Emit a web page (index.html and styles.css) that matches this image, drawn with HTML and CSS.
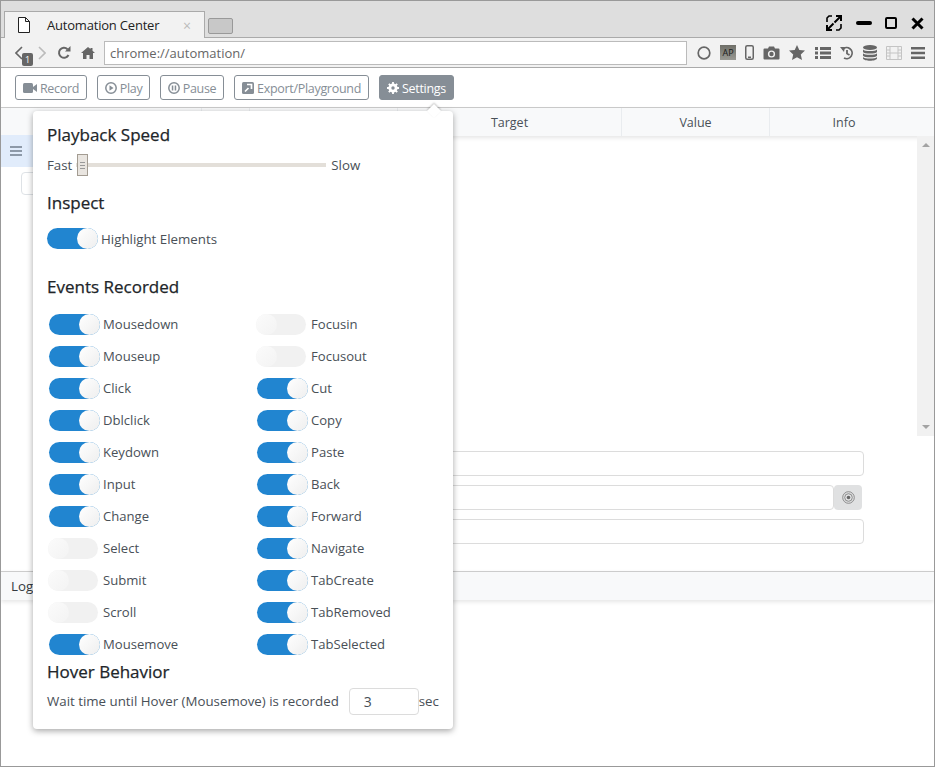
FILE: index.html
```html
<!DOCTYPE html>
<html>
<head>
    <title>Automation Center</title>
    <link rel="stylesheet" href="styles.css">
</head>
<body>
<div class="window">
    <div class="tabstrip">
        <div class="tab">
            <svg class="tab-file" width="12" height="16" viewBox="0 0 12 16"><path d="M.5.5h7l4 4v11H.5zM7.500.5v4h4" fill="#fff" stroke="#222"/></svg>
            <span class="tab-title">Automation Center</span>
            <span class="tab-close">×</span>
        </div>
        <div class="newtab"></div>
        <div class="winctl">
            <svg width="16" height="16" viewBox="0 0 16 16"><path d="M1 7V3l2-2h3M15 9v4l-2 2h-3" fill="none" stroke="#000" stroke-width="1.600"/><path d="M8.500 7.500L15 1M10 1h5v5M7.500 8.500L1 15M1 10v5h5" fill="none" stroke="#000" stroke-width="2"/></svg>
            <svg width="16" height="16" viewBox="0 0 16 16"><rect x="0" y="6" width="16" height="4" rx="2" fill="#000"/></svg>
            <svg width="12" height="12" viewBox="0 0 12 12"><rect x="1" y="1" width="10" height="10" rx="1" fill="none" stroke="#000" stroke-width="2"/></svg>
            <svg width="13" height="13" viewBox="0 0 13 13"><path d="M1.500 1.500l10 10M11.500 1.500l-10 10" stroke="#000" stroke-width="3"/></svg>
        </div>
    </div>

    <div class="navbar">
        <svg class="nav-back" width="8" height="14" viewBox="0 0 8 14"><path d="M7 1L1 7l6 6" fill="none" stroke="#666" stroke-width="1.600"/></svg>
        <span class="nav-badge">1</span>
        <svg class="nav-fwd" width="8" height="14" viewBox="0 0 8 14"><path d="M1 1l6 6-6 6" fill="none" stroke="#bbb" stroke-width="1.600"/></svg>
        <svg class="nav-reload" width="14" height="14" viewBox="0 0 14 14"><path d="M11.500 9A5 5 0 1 1 10.500 3.200" fill="none" stroke="#666" stroke-width="2"/><path d="M8 5.500h5.500V0z" fill="#666"/></svg>
        <svg class="nav-home" width="14" height="12" viewBox="0 0 14 12"><path d="M7 0L0 6h2v6h3.500V8h3v4H12V6h2l-2.500-2.200V1h-2v1z" fill="#666"/></svg>
        <div class="omnibox">chrome://automation/</div>
        <div class="nav-icons">
            <svg width="14" height="14" viewBox="0 0 14 14"><circle cx="7" cy="7" r="5.800" fill="none" stroke="#666" stroke-width="1.700"/></svg>
            <span class="ap-icon">AP</span>
            <svg width="9" height="15" viewBox="0 0 9 15"><rect x=".75" y=".75" width="7.500" height="13.500" rx="1.500" fill="none" stroke="#666" stroke-width="1.500"/><rect x="3" y="11.500" width="3" height="1.500" fill="#666"/></svg>
            <svg width="17" height="14" viewBox="0 0 17 14"><path d="M1.500 2.500H5L6 .5h5l1 2h3.500q1 0 1 1v9q0 1-1 1h-14q-1 0-1-1v-9q0-1 1-1z" fill="#666"/><circle cx="8.500" cy="8" r="3.600" fill="#f2f2f2"/><circle cx="8.500" cy="8" r="2.200" fill="#666"/></svg>
            <svg width="16" height="15" viewBox="0 0 16 15"><path d="M8 0l2.300 5 5.700.6-4.200 3.800 1.200 5.600L8 12.200 3 15l1.200-5.600L0 5.600 5.700 5z" fill="#666"/></svg>
            <svg width="16" height="12" viewBox="0 0 16 12"><path d="M0 0h3v3H0zM5 0h11v3H5zM0 4.500h3v3H0zM5 4.500h11v3H5zM0 9h3v3H0zM5 9h11v3H5z" fill="#666"/></svg>
            <svg width="14" height="14" viewBox="0 0 14 14"><path d="M2.500 3.500A5.500 5.500 0 1 1 4 12M7 4v3.500l2.500 1.500" fill="none" stroke="#666" stroke-width="1.800"/><path d="M0 1l5 0-1 5z" fill="#666"/></svg>
            <svg width="14" height="16" viewBox="0 0 14 16"><ellipse cx="7" cy="2.500" rx="7" ry="2.500" fill="#666"/><path d="M0 4.500c1 2 13 2 14 0V7c-1 2-13 2-14 0zM0 8.300c1 2 13 2 14 0v2.500c-1 2-13 2-14 0zM0 12c1 2 13 2 14 0v1.500c-1 3-13 3-14 0z" fill="#666"/></svg>
            <svg width="16" height="14" viewBox="0 0 16 14"><path d="M.5.500h15v13H.5zM4 .5v13M12 .5v13M.5 4h3.500M.5 7h3.500M.5 10h3.500M12 4h3.500M12 7h3.500M12 10h3.500M4 7h8" fill="none" stroke="#c4c4c4"/></svg>
            <svg width="14" height="12" viewBox="0 0 14 12"><path d="M0 0h14v2.400H0zM0 4.800h14v2.400H0zM0 9.600h14V12H0z" fill="#666"/></svg>
        </div>
    </div>

    <div class="app-toolbar">
        <button class="btn btn-record">
            <svg width="14" height="10" viewBox="0 0 14 10"><rect width="10" height="10" rx="1.500" fill="#868e96"/><path d="M10 4l4-3v8l-4-3z" fill="#868e96"/></svg>
            <span>Record</span>
        </button>
        <button class="btn btn-play">
            <svg width="12" height="12" viewBox="0 0 12 12"><circle cx="6" cy="6" r="5.200" fill="none" stroke="#868e96" stroke-width="1.500"/><path d="M4.500 3.200l4 2.800-4 2.800z" fill="#868e96"/></svg>
            <span>Play</span>
        </button>
        <button class="btn btn-pause">
            <svg width="12" height="12" viewBox="0 0 12 12"><circle cx="6" cy="6" r="5.200" fill="none" stroke="#868e96" stroke-width="1.500"/><path d="M3.800 3.500h1.500v5H3.800zM6.700 3.500h1.500v5H6.700z" fill="#868e96"/></svg>
            <span>Pause</span>
        </button>
        <button class="btn btn-export">
            <svg width="12" height="12" viewBox="0 0 12 12"><rect width="12" height="12" rx="1.500" fill="#868e96"/><path d="M3 9.500l3.500-3.500M5 2.500h4.500V7" fill="none" stroke="#fff" stroke-width="1.700"/></svg>
            <span>Export/Playground</span>
        </button>
        <button class="btn btn-settings">
            <svg width="12" height="12" viewBox="0 0 12 12"><circle cx="6" cy="6" r="3.400" fill="none" stroke="#fff" stroke-width="2.400"/><path d="M6 0v12M0 6h12M1.800 1.800l8.400 8.400M10.200 1.800l-8.400 8.400" stroke="#fff" stroke-width="1.800"/><circle cx="6" cy="6" r="1.700" fill="#868e96"/></svg>
            <span>Settings</span>
        </button>
    </div>

    <div class="table-head">
        <div class="th th-grip"></div>
        <div class="th th-num"></div>
        <div class="th th-cmd"></div>
        <div class="th th-target">Target</div>
        <div class="th th-value">Value</div>
        <div class="th th-info">Info</div>
    </div>

    <div class="table-body">
        <div class="rows">
            <div class="row-active">
                <svg width="12" height="10" viewBox="0 0 12 10"><path d="M0 0h12v2H0zM0 4h12v2H0zM0 8h12v2H0z" fill="#8d99a8"/></svg>
            </div>
            <div class="row-btn"></div>
        </div>
        <div class="scrollbar">
            <span class="arrow-up"></span>
            <span class="arrow-down"></span>
        </div>
    </div>

    <div class="form">
        <div class="field"></div>
        <div class="field-row">
            <div class="field field-short"></div>
            <div class="target-btn">
                <svg width="13" height="13" viewBox="0 0 13 13"><circle cx="6.500" cy="6.500" r="5.800" fill="none" stroke="#777" stroke-width=".8"/><circle cx="6.500" cy="6.500" r="3.800" fill="none" stroke="#777" stroke-width=".8"/><circle cx="6.500" cy="6.500" r="1.800" fill="#666"/></svg>
            </div>
        </div>
        <div class="field"></div>
    </div>

    <div class="logbar">Log</div>

    <div class="popover">
        <h3 class="pop-title pop-title-first">Playback Speed</h3>
        <div class="speed">
            <span>Fast</span>
            <div class="slider">
                <span class="slider-handle"></span>
            </div>
            <span>Slow</span>
        </div>

        <h3 class="pop-title pop-title-inspect">Inspect</h3>
        <div class="highlight">
            <span class="switch switch-flush"></span>
            <span>Highlight Elements</span>
        </div>

        <h3 class="pop-title pop-title-events">Events Recorded</h3>
        <div class="events">
            <div class="event"><span class="switch"></span>Mousedown</div>
            <div class="event"><span class="switch off"></span>Focusin</div>
            <div class="event"><span class="switch"></span>Mouseup</div>
            <div class="event"><span class="switch off"></span>Focusout</div>
            <div class="event"><span class="switch"></span>Click</div>
            <div class="event"><span class="switch"></span>Cut</div>
            <div class="event"><span class="switch"></span>Dblclick</div>
            <div class="event"><span class="switch"></span>Copy</div>
            <div class="event"><span class="switch"></span>Keydown</div>
            <div class="event"><span class="switch"></span>Paste</div>
            <div class="event"><span class="switch"></span>Input</div>
            <div class="event"><span class="switch"></span>Back</div>
            <div class="event"><span class="switch"></span>Change</div>
            <div class="event"><span class="switch"></span>Forward</div>
            <div class="event"><span class="switch off"></span>Select</div>
            <div class="event"><span class="switch"></span>Navigate</div>
            <div class="event"><span class="switch off"></span>Submit</div>
            <div class="event"><span class="switch"></span>TabCreate</div>
            <div class="event"><span class="switch off"></span>Scroll</div>
            <div class="event"><span class="switch"></span>TabRemoved</div>
            <div class="event"><span class="switch"></span>Mousemove</div>
            <div class="event"><span class="switch"></span>TabSelected</div>
        </div>

        <h3 class="pop-title">Hover Behavior</h3>
        <div class="hover-row">
            <span class="hover-text">Wait time until Hover (Mousemove) is recorded</span>
            <div class="hover-input">3</div>
            <span class="hover-unit">sec</span>
        </div>
    </div>
</div>
</body>
</html>
```

FILE: styles.css
```css
* {
    box-sizing: border-box;
}
body {
    margin: 0;
    font-family: "Open Sans", "Noto Sans", sans-serif;
    font-size: 13.3px;
    color: #495057;
    background-color: #fff;
}
.window {
    position: relative;
    width: 935px;
    height: 767px;
    border: 1px solid #999;
    overflow: hidden;
}

/* chrome */
.tabstrip {
    display: flex;
    align-items: flex-end;
    height: 37px;
    padding-left: 3px;
    background-color: #dedede;
    border-bottom: 1px solid #aaa;
}
.tab {
    display: flex;
    align-items: center;
    width: 201px;
    height: 27px;
    margin-bottom: -1px;
    padding: 0 13px;
    background-color: #f2f2f2;
    border: 1px solid #aaa;
    border-bottom: none;
    color: #222;
}
.tab-title {
    margin-left: 17px;
    font-size: 13px;
    letter-spacing: -0.2px;
}
.tab-close {
    margin-left: auto;
    color: #bbb;
    font-size: 14px;
}
.newtab {
    width: 25px;
    height: 16px;
    margin: 0 0 3px 3px;
    background-color: #c8c8c8;
    border: 1px solid #999;
    border-radius: 2px;
}
.winctl {
    display: flex;
    align-items: center;
    justify-content: space-between;
    width: 98px;
    height: 16px;
    margin: 0 10px 6px auto;
}
.navbar {
    display: flex;
    align-items: center;
    height: 30px;
    padding-left: 14px;
    background-color: #f2f2f2;
    border-bottom: 1px solid #aaa;
}
.nav-back {
    flex: none;
}
.nav-badge {
    width: 11px;
    height: 13px;
    margin: 13px 0 0 -1px;
    background-color: #666;
    border-radius: 2px;
    color: #fff;
    font-size: 9px;
    line-height: 13px;
    text-align: center;
}
.nav-fwd {
    margin-left: 5px;
}
.nav-reload {
    margin-left: 11px;
}
.nav-home {
    margin-left: 10px;
}
.omnibox {
    width: 583px;
    height: 24px;
    margin-left: 9px;
    padding-left: 5px;
    background-color: #fff;
    border: 1px solid #bbb;
    color: #666;
    font-size: 13px;
    line-height: 22px;
}
.nav-icons {
    display: flex;
    align-items: center;
    justify-content: space-between;
    width: 228px;
    margin-left: 10px;
}
.ap-icon {
    width: 16px;
    height: 15px;
    background: linear-gradient(#6f6f68, #9a9a94);
    color: #1c1c1c;
    font-size: 9px;
    line-height: 15px;
    text-align: center;
}

/* app */
.app-toolbar {
    display: flex;
    gap: 10px;
    height: 40px;
    padding: 7px 14px;
    border-bottom: 1px solid #ccc;
}
.btn {
    display: flex;
    align-items: center;
    justify-content: center;
    gap: 3px;
    height: 25px;
    padding: 0;
    background-color: #fff;
    border: 1px solid #868e96;
    border-radius: 3px;
    color: #868e96;
    font-family: inherit;
    font-size: 12.500px;
    letter-spacing: -0.3px;
}
.btn span {
    padding-top: 2px;
}
.btn-record {
    width: 72px;
}
.btn-play {
    width: 53px;
}
.btn-pause {
    width: 64px;
}
.btn-export {
    width: 135px;
}
.btn-settings {
    width: 75px;
    background-color: #868e96;
    color: #fff;
}
.table-head {
    display: flex;
    height: 28px;
    background-color: #f8f9fa;
    box-shadow: 0 2px 4px rgba(0, 0, 0, 0.1);
    color: #495057;
    font-size: 12.500px;
    line-height: 30px;
    text-align: center;
}
.th {
    border-right: 1px solid #e9ecef;
}
.th-grip {
    width: 201px;
}
.th-num {
    width: 48px;
}
.th-cmd {
    width: 148px;
}
.th-target {
    width: 224px;
}
.th-value {
    width: 148px;
}
.th-info {
    width: 148px;
    border-right: none;
}
.table-body {
    display: flex;
    justify-content: space-between;
    height: 300px;
}
.row-active {
    display: flex;
    align-items: center;
    width: 200px;
    height: 32px;
    margin-top: -1px;
    padding-left: 9px;
    background-color: #e1ecfb;
}
.row-btn {
    width: 60px;
    height: 23px;
    margin: 5px 0 0 20px;
    border: 1px solid #dee2e6;
    border-radius: 4px;
}
.scrollbar {
    display: flex;
    flex-direction: column;
    align-items: center;
    justify-content: space-between;
    width: 17px;
    padding: 7px 0;
    background-color: #f1f1f1;
}
.arrow-up {
    border: 4px solid transparent;
    border-top: none;
    border-bottom: 4px solid #a3a3a3;
}
.arrow-down {
    border: 4px solid transparent;
    border-bottom: none;
    border-top: 4px solid #a3a3a3;
}
.form {
    display: flex;
    flex-direction: column;
    gap: 9px;
    width: 863px;
    padding: 15px 0 0 200px;
}
.field {
    height: 25px;
    border: 1px solid #dcdcdc;
    border-radius: 4px;
}
.field-row {
    display: flex;
}
.field-short {
    flex: 1;
}
.target-btn {
    display: flex;
    align-items: center;
    justify-content: center;
    width: 28px;
    height: 25px;
    margin-right: 2px;
    background-color: #e0e1e2;
    border-radius: 4px;
}
.logbar {
    height: 29px;
    margin-top: 27px;
    padding-left: 10px;
    background-color: #f8f9fa;
    border-top: 1px solid #ccc;
    box-shadow: 0 2px 4px rgba(0, 0, 0, 0.1);
    color: #343a40;
    line-height: 28px;
}

/* settings popover */
.popover {
    position: absolute;
    top: 110px;
    left: 32px;
    width: 420px;
    height: 618px;
    padding: 0 14px;
    background-color: #fff;
    border-radius: 4px;
    box-shadow: 0 2px 6px rgba(0, 0, 0, 0.35);
}
.popover::before {
    content: "";
    position: absolute;
    top: -5px;
    right: 14px;
    width: 10px;
    height: 10px;
    background-color: #fff;
    transform: rotate(45deg);
    box-shadow: -1px -1px 2px rgba(0, 0, 0, 0.2);
}
.pop-title {
    position: relative;
    margin: 0;
    color: #212529;
    font-size: 17px;
    font-weight: 500;
    line-height: 24px;
    -webkit-text-stroke: 0.25px #212529;
}
.pop-title-first {
    margin-top: 12px;
}
.pop-title-inspect {
    margin-top: 16px;
}
.pop-title-events {
    margin-top: 26px;
}
.speed {
    display: flex;
    align-items: center;
    height: 20px;
    margin-top: 8px;
}
.slider {
    position: relative;
    width: 250px;
    height: 4px;
    margin: 0 5px 0 4px;
    background-color: #e3dfd9;
}
.slider-handle {
    position: absolute;
    top: -9px;
    left: 1px;
    width: 11px;
    height: 22px;
    background-color: #e9e5e0;
    background-image: repeating-linear-gradient(#999 0 1px, transparent 1px 3px);
    background-size: 5px 7px;
    background-position: center;
    background-repeat: no-repeat;
    border: 1px solid #a39c92;
}
.highlight {
    display: flex;
    align-items: center;
    gap: 3px;
    margin-top: 13px;
}
.switch {
    position: relative;
    flex: none;
    width: 51px;
    height: 21px;
    margin: 0 3px 0 2px;
    background-color: #2185d0;
    border-radius: 11px;
}
.switch::after {
    content: "";
    position: absolute;
    top: 0;
    right: 0;
    width: 21px;
    height: 21px;
    background: linear-gradient(135deg, #fff, #eee);
    border-radius: 50%;
}
.switch.off {
    width: 50px;
    margin: 0 5px 0 1px;
    background-color: #f1f1f1;
}
.switch.off::after {
    right: auto;
    left: 0;
    background: linear-gradient(135deg, #fbfbfb, #f3f3f3);
}
.switch-flush {
    margin: 0;
}
.events {
    display: grid;
    grid-template-columns: 208px 1fr;
    grid-auto-rows: 32px;
    margin-top: 9px;
    font-size: 13.1px;
}
.event {
    display: flex;
    align-items: center;
}
.hover-row {
    display: flex;
    align-items: center;
    margin-top: 4px;
}
.hover-text {
    padding-bottom: 2px;
    white-space: nowrap;
}
.hover-input {
    flex: none;
    width: 70px;
    height: 27px;
    margin-left: 10px;
    padding-left: 14px;
    border: 1px solid #dcdcdc;
    border-radius: 4px;
    font-size: 14px;
    line-height: 25px;
}
.hover-unit {
    padding-bottom: 2px;
}
```
